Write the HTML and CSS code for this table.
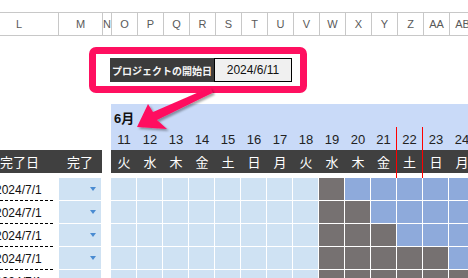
FILE: index.html
```html
<!DOCTYPE html>
<html lang="ja">
<head>
<meta charset="utf-8">
<link rel="stylesheet" href="styles.css">
</head>
<body>
<div class="page">
  <div class="grid colhead">
    <div class="ch first">L</div><div class="ch">M</div><div class="ch">N</div><div class="ch">O</div><div class="ch">P</div><div class="ch">Q</div><div class="ch">R</div><div class="ch">S</div><div class="ch">T</div><div class="ch">U</div><div class="ch">V</div><div class="ch">W</div><div class="ch">X</div><div class="ch">Y</div><div class="ch">Z</div><div class="ch">AA</div><div class="ch">AB</div>
  </div>
  <div class="top">
    <div class="callout">
      <div class="label">プロジェクトの開始日</div>
      <div class="date">2024/6/11</div>
    </div>
  </div>
  <div class="grid sheet">
    <div></div><div></div><div></div>
    <div class="month">6月</div>

    <div></div><div></div><div></div>
    <div class="num">11</div><div class="num">12</div><div class="num">13</div><div class="num">14</div><div class="num">15</div><div class="num">16</div><div class="num">17</div><div class="num">18</div><div class="num">19</div><div class="num">20</div><div class="num red">21</div><div class="num red">22</div><div class="num">23</div><div class="num">24</div>

    <div class="wd k">完了日</div><div class="wd">完了</div><div></div>
    <div class="wd">火</div><div class="wd">水</div><div class="wd">木</div><div class="wd">金</div><div class="wd">土</div><div class="wd">日</div><div class="wd">月</div><div class="wd">火</div><div class="wd">水</div><div class="wd">木</div><div class="wd red">金</div><div class="wd red">土</div><div class="wd">日</div><div class="wd">月</div>

    <div class="dt">2024/7/1</div><div class="sel"><span class="tri"></span></div><div></div>
    <div class="d c"></div><div class="d c"></div><div class="d c"></div><div class="d c"></div><div class="d c"></div><div class="d c"></div><div class="d c"></div><div class="d c"></div><div class="d g"></div><div class="d b"></div><div class="d b"></div><div class="d b"></div><div class="d b"></div><div class="d b"></div>

    <div class="dt">2024/7/1</div><div class="sel"><span class="tri"></span></div><div></div>
    <div class="d c"></div><div class="d c"></div><div class="d c"></div><div class="d c"></div><div class="d c"></div><div class="d c"></div><div class="d c"></div><div class="d c"></div><div class="d g"></div><div class="d g"></div><div class="d b"></div><div class="d b"></div><div class="d b"></div><div class="d b"></div>

    <div class="dt">2024/7/1</div><div class="sel"><span class="tri"></span></div><div></div>
    <div class="d c"></div><div class="d c"></div><div class="d c"></div><div class="d c"></div><div class="d c"></div><div class="d c"></div><div class="d c"></div><div class="d c"></div><div class="d g"></div><div class="d g"></div><div class="d g"></div><div class="d b"></div><div class="d b"></div><div class="d b"></div>

    <div class="dt">2024/7/1</div><div class="sel"><span class="tri"></span></div><div></div>
    <div class="d c"></div><div class="d c"></div><div class="d c"></div><div class="d c"></div><div class="d c"></div><div class="d c"></div><div class="d c"></div><div class="d c"></div><div class="d g"></div><div class="d g"></div><div class="d g"></div><div class="d g"></div><div class="d g"></div><div class="d b"></div>

    <div class="dt">2024/7/1</div><div class="sel"><span class="tri"></span></div><div></div>
    <div class="d c"></div><div class="d c"></div><div class="d c"></div><div class="d c"></div><div class="d c"></div><div class="d c"></div><div class="d c"></div><div class="d c"></div><div class="d g"></div><div class="d g"></div><div class="d g"></div><div class="d g"></div><div class="d g"></div><div class="d g"></div>
  </div>

  <svg class="arrow" viewBox="0 0 468 278" width="468" height="278">
    <defs>
      <filter id="sh" x="-20%" y="-20%" width="140%" height="140%">
        <feDropShadow dx="2" dy="2" stdDeviation="1.3" flood-color="#000" flood-opacity="0.35"/>
      </filter>
    </defs>
    <polygon points="137,127 148,104 153,112 210,87.3 212.8,92.8 157,120 167,129" fill="#ff1060" filter="url(#sh)"/>
  </svg>
</div>
</body>
</html>
```

FILE: styles.css
```css
html, body {
  margin: 0;
  padding: 0;
  background: #fff;
  overflow: hidden;
}

body {
  width: 468px;
  height: 278px;
  font-family: "Liberation Sans", "Noto Sans CJK JP", sans-serif;
}

.page {
  position: relative;
  width: 468px;
  height: 278px;
  overflow: hidden;
  padding-top: 12px;
  box-sizing: border-box;
}

.grid {
  display: grid;
  grid-template-columns: 78px 44px 9px repeat(14, 26px);
  margin-left: -20px;
  width: 495px;
}

.grid > * {
  box-sizing: border-box;
  min-width: 0;
}

/* column letters */
.colhead {
  height: 24px;
  box-sizing: border-box;
  border-top: 1px solid #c8c8c8;
  border-bottom: 1px solid #c8c8c8;
}

.ch {
  border-left: 1px solid #c8c8c8;
  font-size: 11px;
  color: #595959;
  display: flex;
  align-items: center;
  justify-content: center;
}

.ch.first {
  border-left: none;
}

/* callout */
.top {
  height: 68px;
  box-sizing: border-box;
  padding: 11px 0 0 89px;
}

.callout {
  width: 218px;
  height: 46px;
  box-sizing: border-box;
  border: 7px solid #ff1060;
  border-radius: 7px;
  padding: 4px 8px 4px 14px;
  display: flex;
  background: #fff;
}

.label {
  width: 104px;
  height: 24px;
  background: #3c3c3c;
  color: #f4f4f4;
  font-family: "Noto Sans CJK JP", sans-serif;
  font-size: 10px;
  font-weight: 700;
  display: flex;
  align-items: center;
  justify-content: center;
  white-space: nowrap;
}

.date {
  width: 78px;
  height: 24px;
  box-sizing: border-box;
  border: 1px solid #000;
  background: #f0f0f0;
  color: #111;
  font-size: 12px;
  display: flex;
  align-items: center;
  justify-content: center;
}

/* sheet */
.sheet {
  grid-template-rows: 23px 23px 28px repeat(5, 23px);
}

.month {
  grid-column: span 14;
  background: #c9daf8;
  font-family: "Liberation Sans", "Noto Sans CJK JP", sans-serif;
  font-size: 13px;
  font-weight: 700;
  color: #111;
  padding: 3px 0 0 3px;
  display: flex;
  align-items: center;
}

.num {
  background: #c9daf8;
  font-size: 13px;
  color: #222;
  display: flex;
  align-items: center;
  justify-content: center;
  padding-top: 1px;
}

.wd {
  background: linear-gradient(#404040, #404040) top left / 100% 23px no-repeat;
  color: #fff;
  font-family: "Noto Sans CJK JP", sans-serif;
  font-size: 13px;
  line-height: 23px;
  text-align: center;
  white-space: nowrap;
}

.wd.k {
  text-align: left;
  padding-left: 20px;
}

.red {
  border-right: 1px solid #ff0000;
}

.dt {
  margin-right: 3px;
  padding-left: 15px;
  font-size: 12px;
  color: #111;
  display: flex;
  align-items: center;
  white-space: nowrap;
  background: repeating-linear-gradient(to right, #000 0 3px, transparent 3px 5px) left bottom / 100% 1px no-repeat;
}

.sel {
  background: #cfe2f3;
  border-left: 1px solid #fff;
  border-right: 1px solid #fff;
  border-bottom: 1px solid #fff;
  display: flex;
  align-items: center;
  justify-content: flex-end;
  padding-right: 5px;
}

.tri {
  width: 0;
  height: 0;
  border-left: 3.5px solid transparent;
  border-right: 3.5px solid transparent;
  border-top: 4px solid #4a8bd1;
}

.d {
  border-right: 1px solid #fff;
  border-bottom: 1px solid #fff;
}

.c { background: #cfe2f3; }
.g { background: #767171; }
.b { background: #8eaadb; }

.arrow {
  position: absolute;
  left: 0;
  top: 0;
  pointer-events: none;
}
```
